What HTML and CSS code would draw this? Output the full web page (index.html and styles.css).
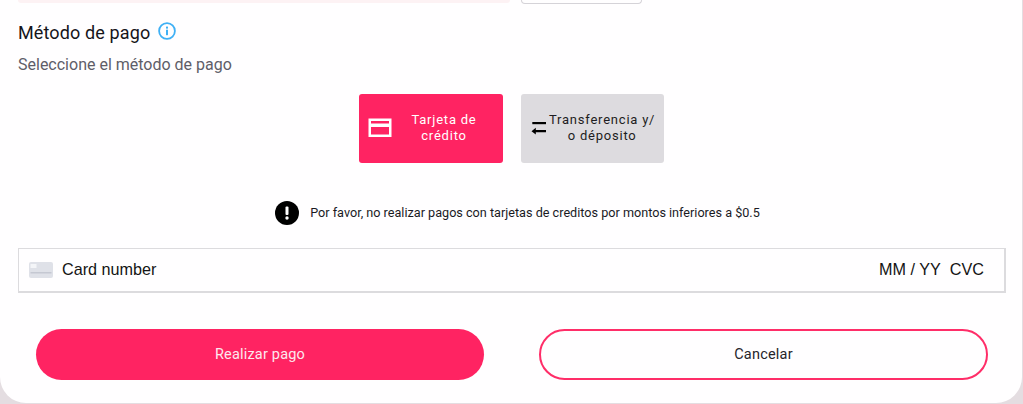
FILE: index.html
```html
<!DOCTYPE html>
<html lang="es">
<head>
<meta charset="utf-8">
<title>Método de pago</title>
<link rel="stylesheet" href="styles.css">
</head>
<body>
<main class="card">
  <div class="top-row">
    <div class="top-input"></div>
    <div class="top-button"></div>
  </div>
  <div class="heading-row">
    <h2 class="heading">Método de pago</h2>
    <svg class="info-icon" viewBox="0 0 18 18" width="18" height="18" aria-hidden="true">
      <circle cx="9" cy="9" r="7.900" fill="none" stroke="#3fb0f5" stroke-width="1.800"/>
      <rect x="8" y="7.700" width="2" height="5.500" fill="#3fb0f5"/>
      <rect x="8" y="4.600" width="2" height="2" fill="#3fb0f5"/>
    </svg>
  </div>
  <p class="subheading">Seleccione el método de pago</p>
  <div class="methods">
    <button class="method method-active" type="button">
      <svg class="method-icon card-icon" viewBox="0 0 24 20" width="24" height="20" aria-hidden="true">
        <path fill="#fff" fill-rule="evenodd" d="M0.500 0.500h23v18.500h-23zM3 3v2.500h18V3zM3 9v7.500h18V9z"/>
      </svg>
      <span class="method-label label-card">Tarjeta de crédito</span>
    </button>
    <button class="method method-idle" type="button">
      <svg class="method-icon arrows-icon" viewBox="0 0 16 16" width="16" height="16" aria-hidden="true">
        <rect x="1.300" y="2" width="13.700" height="2.200" fill="#000"/>
        <path fill="#000" d="M0.500 11.200 4.800 7.800v2.300H15v2.200H4.800v2.300z"/>
      </svg>
      <span class="method-label label-transfer">Transferencia y/<br>o déposito</span>
    </button>
  </div>
  <div class="notice">
    <svg class="notice-icon" viewBox="0 0 24 24" width="24" height="24" aria-hidden="true">
      <circle cx="12" cy="12" r="12" fill="#000"/>
      <rect x="10.500" y="5.500" width="3" height="8.500" rx="1" fill="#fff"/>
      <circle cx="12" cy="17" r="1.700" fill="#fff"/>
    </svg>
    <span class="notice-text">Por favor, no realizar pagos con tarjetas de creditos por montos inferiores a $0.5</span>
  </div>
  <div class="card-field">
    <svg class="field-icon" viewBox="0 0 24 16" width="24" height="16" aria-hidden="true">
      <rect width="24" height="16" rx="2" fill="#dfe1e8"/>
      <rect x="1.500" y="2" width="6" height="4" fill="#f4f5f8"/>
      <rect x="1.500" y="10" width="21" height="1.500" fill="#c5c8d2"/>
    </svg>
    <span class="field-number">Card number</span>
    <span class="field-expiry">MM / YY</span>
    <span class="field-cvc">CVC</span>
  </div>
  <div class="actions">
    <button class="action action-primary" type="button">Realizar pago</button>
    <button class="action action-secondary" type="button">Cancelar</button>
  </div>
</main>
</body>
</html>
```
FILE: styles.css
```css
* { box-sizing: border-box; }

html, body {
  height: 100%;
}

body {
  margin: 0;
  background: #e4dde1;
  font-family: Roboto, "Liberation Sans", sans-serif;
  overflow: hidden;
}

.card {
  height: 403px;
  margin-right: 1px;
  padding: 0 16px 0 18px;
  background: #fffeff;
  border-radius: 0 0 26px 26px;
}

.top-row {
  display: flex;
  gap: 11px;
  height: 4px;
}

.top-input {
  width: 492px;
  height: 3px;
  background: #fdf2f4;
  border-radius: 0 0 6px 6px;
}

.top-button {
  width: 121px;
  height: 4px;
  border: 1px solid #d5d3d8;
  border-top: 0;
  border-radius: 0 0 5px 5px;
}

.heading-row {
  display: flex;
  align-items: center;
  gap: 8px;
  margin-top: 17px;
  height: 24px;
}

.heading {
  margin: 0;
  font-size: 18px;
  font-weight: 400;
  line-height: 24px;
  letter-spacing: 0.13px;
  color: #16151a;
}

.info-icon {
  margin-top: -4px;
}

.subheading {
  margin: 10px 0 0;
  font-size: 16px;
  line-height: 20px;
  color: #5e5d68;
}

.methods {
  display: flex;
  justify-content: center;
  gap: 18px;
  margin-top: 19px;
  padding-right: 1px;
}

.method {
  display: flex;
  align-items: center;
  width: 144px;
  height: 69px;
  padding: 0 0 1px;
  border: 0;
  border-radius: 3px;
  font-family: Roboto, sans-serif;
  font-size: 13px;
  font-weight: 450;
  line-height: 16px;
  letter-spacing: 0.78px;
  text-align: center;
}

.method-active {
  background: #ff2362;
  color: #fff;
}

.method-idle {
  width: 143px;
  background: #dddbdf;
  color: #1e1d22;
}

.card-icon {
  margin-left: 9px;
  flex: none;
}

.label-card {
  width: 84px;
  margin-left: 10px;
}

.arrows-icon {
  margin-left: 10px;
  flex: none;
}

.label-transfer {
  flex: none;
  margin-left: 2px;
  white-space: nowrap;
}

.notice {
  display: flex;
  align-items: center;
  justify-content: center;
  gap: 11px;
  margin-top: 38px;
  padding-left: 11px;
  height: 24px;
}

.notice-text {
  font-size: 12.65px;
  line-height: 16px;
  color: #1a1a1f;
}

.card-field {
  display: flex;
  align-items: center;
  height: 45px;
  margin-top: 23px;
  padding: 0 20px 1px 10px;
  border: 2px solid #dcdbde;
  border-width: 1px 2px 2px 1px;
  font-family: "Liberation Sans", Arial, sans-serif;
  font-size: 16.2px;
  color: #141414;
}

.field-icon {
  flex: none;
}

.field-number {
  margin-left: 9px;
  flex: 1;
}

.field-cvc {
  margin-left: 9px;
}

.actions {
  display: flex;
  gap: 55px;
  margin-top: 36px;
  padding-left: 18px;
}

.action {
  height: 51px;
  border-radius: 26px;
  font-family: Roboto, sans-serif;
  font-size: 14.5px;
  font-weight: 400;
  letter-spacing: 0.2px;
}

.action-primary {
  width: 448px;
  border: 0;
  background: #ff2362;
  color: #fde8ee;
}

.action-secondary {
  width: 449px;
  border: 2px solid #ff2d68;
  background: #fffeff;
  color: #26252a;
}
```
